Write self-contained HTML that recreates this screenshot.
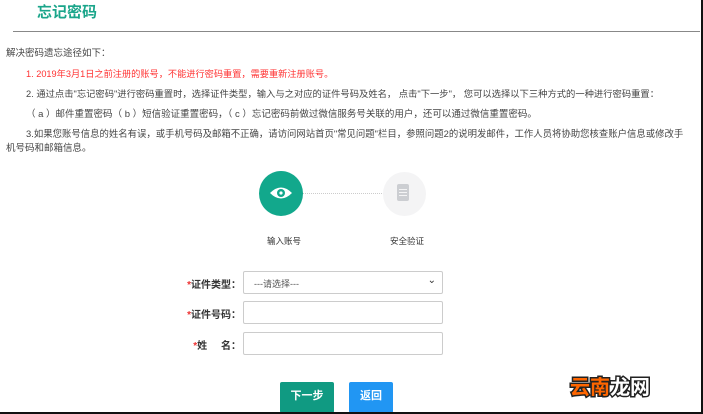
<!DOCTYPE html>
<html><head><meta charset="utf-8"><style>
*{margin:0;padding:0;box-sizing:border-box}
body{width:703px;height:414px;background:#fff;position:relative;overflow:hidden;font-family:"Liberation Sans","Noto Sans CJK SC",sans-serif;color:#333}
.a{position:absolute;white-space:nowrap}
.t{font-size:9.5px;color:#444}
.lab{font-size:10px;color:#333;font-weight:bold;text-align:right;width:70px}
.lab b{color:#e33}
.in{position:absolute;left:243px;width:200px;height:23px;border:1px solid #ccc;border-radius:2px;background:#fff}
</style></head><body>
<div class="a" style="left:37px;top:1px;font-size:15px;font-weight:bold;color:#1aa58a">忘记密码</div>
<div class="a" style="left:13px;top:31px;width:687px;height:1px;background:#888"></div>
<div class="a t" style="left:6px;top:45px">解决密码遗忘途径如下：</div>
<div class="a t" style="left:26px;top:66px;color:#f33;font-size:9.2px">1. 2019年3月1日之前注册的账号，不能进行密码重置，需要重新注册账号。</div>
<div class="a t" style="left:26px;top:86px;font-size:9.3px">2. 通过点击"忘记密码"进行密码重置时，选择证件类型，输入与之对应的证件号码及姓名， 点击"下一步"， 您可以选择以下三种方式的一种进行密码重置：</div>
<div class="a t" style="left:26px;top:106px">（ a ）邮件重置密码（ b ）短信验证重置密码，（ c ）忘记密码前做过微信服务号关联的用户，还可以通过微信重置密码。</div>
<div class="a t" style="left:26px;top:126px;font-size:9.4px">3.如果您账号信息的姓名有误，或手机号码及邮箱不正确，请访问网站首页"常见问题"栏目，参照问题2的说明发邮件，工作人员将协助您核查账户信息或修改手</div>
<div class="a t" style="left:6px;top:140px">机号码和邮箱信息。</div>
<div class="a" style="left:302px;top:193px;width:82px;border-top:1px dotted #ccc"></div>
<div class="a" style="left:259px;top:171px;width:44px;height:45px;border-radius:50%;background:#12a88c"></div>
<svg class="a" style="left:268px;top:185px" width="26" height="16" viewBox="0 0 26 16"><path d="M2 8Q13 -3 24 8Q13 19 2 8Z" fill="#fff"/><circle cx="13" cy="8" r="4" fill="#12a88c"/><circle cx="13" cy="8" r="1.6" fill="#fff"/></svg>
<div class="a" style="left:383px;top:172px;width:43px;height:44px;border-radius:50%;background:#f4f4f5"></div>
<div class="a" style="left:397px;top:184px;width:12px;height:17px;background:#ccced2;border-radius:2px"></div>
<div class="a" style="left:399px;top:189px;width:8px;height:1px;background:#f4f4f5;box-shadow:0 3px #f4f4f5,0 6px #f4f4f5"></div>
<div class="a" style="left:267px;top:235px;font-size:8.5px;color:#333">输入账号</div>
<div class="a" style="left:390px;top:235px;font-size:8.5px;color:#333">安全验证</div>
<div class="a lab" style="left:171px;top:276px"><b>*</b>证件类型：</div>
<div class="in" style="top:271px"><span class="a" style="left:10px;top:5px;font-size:9px;color:#555">---请选择---</span><span class="a" style="right:6px;top:3px;font-size:10px;color:#333">⌄</span></div>
<div class="a lab" style="left:171px;top:306px"><b>*</b>证件号码：</div>
<div class="in" style="top:301px"></div>
<div class="a lab" style="left:171px;top:337px"><b>*</b>姓&nbsp;&nbsp;&nbsp;&nbsp;&nbsp;名：</div>
<div class="in" style="top:332px"></div>
<div class="a" style="left:280px;top:382px;width:54px;height:31px;background:#109a82;color:#fff;font-size:11px;font-weight:bold;text-align:center;line-height:29px;border-radius:2px">下一步</div>
<div class="a" style="left:349px;top:382px;width:44px;height:31px;background:#2196f3;color:#fff;font-size:11px;font-weight:bold;text-align:center;line-height:29px;border-radius:2px">返回</div>
<div class="a" style="left:570px;top:371px;font-size:20px;font-weight:bold;-webkit-text-stroke:3px #222;paint-order:stroke fill"><span style="color:#f60">云南</span><span style="color:#fff">龙网</span></div>
<div class="a" style="left:0;top:412px;width:703px;height:2px;background:#111"></div>
<div class="a" style="left:701px;top:0;width:2px;height:414px;background:#111"></div>
</body></html>
